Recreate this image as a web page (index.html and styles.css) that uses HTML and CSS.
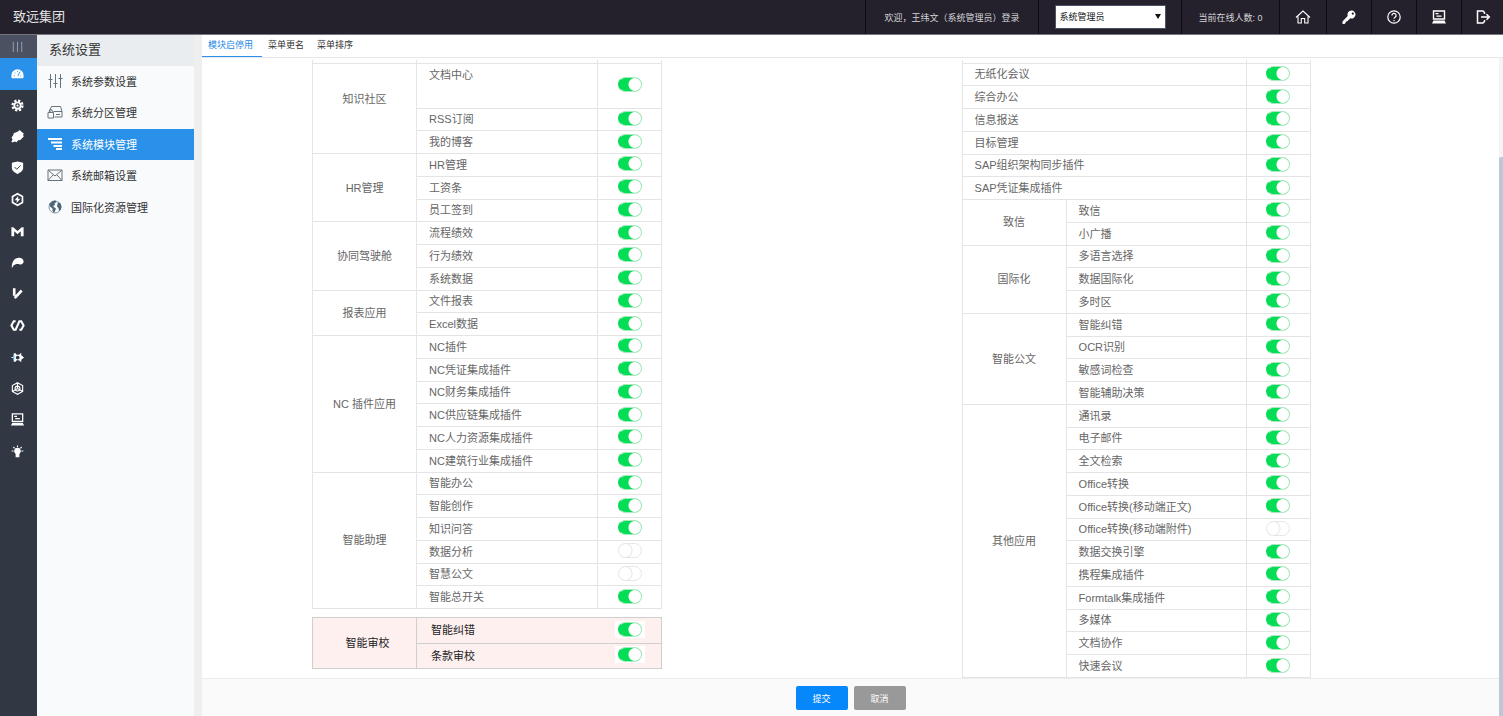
FILE: index.html
```html
<!DOCTYPE html>
<html lang="zh-CN">
<head>
  <meta charset="UTF-8">
  <title>系统模块管理</title>
  <link rel="stylesheet" href="styles.css">
</head>
<body>
  <!-- top bar -->
  <header class="topbar">
    <div class="brand">致远集团</div>
    <div class="top-cell welcome">欢迎，王纬文（系统管理员）登录</div>
    <div class="top-cell role">
      <div class="role-wrap">
        <select class="role-select" aria-label="角色">
          <option>系统管理员</option>
        </select>
      </div>
    </div>
    <div class="top-cell online">当前在线人数: 0</div>
    <button class="top-cell top-btn wide" aria-label="首页">
      <svg viewBox="0 0 16 16"><path d="M1 8.500 8 2l7 6.500M3 7.500V14h3.300v-4.500h3.400V14H13V7.500" fill="none" stroke="currentColor" stroke-width="1.100"/></svg>
    </button>
    <button class="top-cell top-btn" aria-label="修改密码">
      <svg viewBox="0 0 16 16"><path d="M10.500 1.500a4 4 0 1 1-1.200 7.800L6 12.500H4.700v1.300L3.500 15H1.500v-2.500L6.700 7a4 4 0 0 1 3.800-5.500zm1.300 2a1.100 1.100 0 1 0 .1 2.200 1.100 1.100 0 0 0-.1-2.200z" fill="currentColor" fill-rule="evenodd"/></svg>
    </button>
    <button class="top-cell top-btn" aria-label="帮助">
      <svg viewBox="0 0 16 16" fill="none" stroke="currentColor" stroke-width="1.200"><circle cx="8" cy="8" r="6.200"/><path d="M5.900 6.500a2.100 2.100 0 1 1 3.200 1.700c-.8.5-1.100.8-1.100 1.600M8 11v1.200"/></svg>
    </button>
    <button class="top-cell top-btn" aria-label="桌面">
      <svg viewBox="0 0 16 16"><path d="M2.500 2h11v8h-11z" fill="none" stroke="currentColor" stroke-width="1.400"/><path d="M4.500 4h3v1.200h-3zM5.500 6.500h5v1.200h-5zM2.500 11.500h11l1.500 3H1z" fill="currentColor"/></svg>
    </button>
    <button class="top-cell top-btn" aria-label="退出">
      <svg viewBox="0 0 16 16" fill="none" stroke="currentColor" stroke-width="1.500"><path d="M9.500 5V3.500L8 2H2.500v12H8l1.500-1.500V11M6 8h8M11.500 5.200 14.300 8l-2.800 2.800"/></svg>
    </button>
  </header>

  <div class="layout">
    <!-- icon rail -->
    <nav class="rail">
      <button class="rail-toggle" aria-label="收起菜单">
        <svg viewBox="0 0 16 16"><path d="M3.500 3v11M8 3v11M12.500 3v11" stroke="currentColor" fill="none"/></svg>
      </button>
      <ul class="rail-list">
        <li class="active"><a href="#" aria-label="系统设置"><svg viewBox="0 0 16 16"><path d="M2 13a6.700 6.700 0 0 1-.5-3 6.500 6.500 0 0 1 13 0 6.700 6.700 0 0 1-.5 3z" fill="currentColor"/><path d="M4 10.500h1M5 7l.8.7M8 5.500v1M12 10.500h-1M10.800 6 8.300 10.800" stroke="#2991ea" fill="none"/></svg></a></li>
        <li><a href="#" aria-label="参数"><svg viewBox="0 0 16 16"><circle cx="8" cy="8" r="5.300" fill="none" stroke="currentColor" stroke-width="2.400" stroke-dasharray="2.400 1.760"/><circle cx="8" cy="8" r="3.400" fill="none" stroke="currentColor" stroke-width="2"/><circle cx="8" cy="8" r="1.200" fill="currentColor"/></svg></a></li>
        <li><a href="#" aria-label="插件"><svg viewBox="0 0 16 16"><path d="M8.500 2.700 10.500 1l1.400 1.600 2.800 2.200-.8 1.500.8 1.700-4 4-1.700-.2L7 14l-2-.8-2.500 1.300-1-1 1.200-2-1-2.500 2-3 .2-1.600z" fill="currentColor"/></svg></a></li>
        <li><a href="#" aria-label="安全"><svg viewBox="0 0 16 16"><path d="M8 1.500 14 3v5.500c0 3-3 5-6 6.300-3-1.300-6-3.300-6-6.300V3z" fill="currentColor"/><path d="m4.800 7.500 2.400 2.400 4.200-4.200" stroke="#323744" fill="none"/></svg></a></li>
        <li><a href="#" aria-label="性能"><svg viewBox="0 0 16 16"><path d="m8 1.800 5.300 3v6.400L8 14.200l-5.300-3V4.800z" fill="none" stroke="currentColor" stroke-width="1.800"/><path d="M8.800 4 5 8.700h2.300L7 12l4-4.800H8.500z" fill="currentColor"/></svg></a></li>
        <li><a href="#" aria-label="移动"><svg viewBox="0 0 16 16"><path d="M1.500 3.500h2L8 7.500l4.500-4h2v9.500h-3V7.800L8 11 4.500 7.800V13h-3z" fill="currentColor"/></svg></a></li>
        <li><a href="#" aria-label="集成"><svg viewBox="0 0 16 16"><path d="M2 14C1.500 7 5 3 9.500 3c3 0 5 1.500 5 4 0 2.200-2 3.500-4 3-2.500-.7-5.500-.3-7 1.500z" fill="currentColor"/></svg></a></li>
        <li><a href="#" aria-label="工作流"><svg viewBox="0 0 16 16"><path d="M4.500 2.500v8M12.500 4.800 5 13" fill="none" stroke="currentColor" stroke-width="2.800"/></svg></a></li>
        <li><a href="#" aria-label="开发"><svg viewBox="0 0 16 16"><path d="M6 3.500H4L1.500 8 4 12.500h2l4-9h2L14.500 8 12 12.500h-2" fill="none" stroke="currentColor" stroke-width="2.200"/></svg></a></li>
        <li><a href="#" aria-label="数据"><svg viewBox="0 0 16 16"><path d="M4 3.500h2l1 1.500h2.500L12 3v2.500L15 8l-3 2.500V13l-2.500-2H7l-1 1.500H4z" fill="currentColor"/><circle cx="8.200" cy="8" r="2" fill="#323744"/><path d="M4 5v6" stroke="#58b2f5" stroke-width="1.200"/><path d="M1.500 8h2" stroke="currentColor"/></svg></a></li>
        <li><a href="#" aria-label="区块"><svg viewBox="0 0 16 16" fill="none" stroke="currentColor" stroke-width="1.200"><path d="m8 1.800 5.500 3v6.400l-5.500 3-5.500-3V4.800zM8 2v5.500M8 8l5 3M8 8l-5 3"/><circle cx="8" cy="8" r="2.600"/></svg></a></li>
        <li><a href="#" aria-label="终端"><svg viewBox="0 0 16 16"><path d="M2.500 2h11v8h-11z" fill="none" stroke="currentColor" stroke-width="1.400"/><path d="M4.500 4h3v1.200h-3zM5.500 6.500h5v1.200h-5zM2.500 11.500h11l1.500 3H1z" fill="currentColor"/></svg></a></li>
        <li><a href="#" aria-label="提示"><svg viewBox="0 0 16 16"><path d="M8 4a3.600 3.600 0 0 1 2 6.600V14H6v-3.400A3.600 3.600 0 0 1 8 4z" fill="currentColor"/><path d="M8 1.500v2M1.800 7.500h2M12.200 7.500h2M3.600 3.200 5 4.600M12.400 3.200 11 4.600" stroke="currentColor" stroke-width="1.200"/></svg></a></li>
      </ul>
    </nav>

    <!-- second level menu -->
    <aside class="submenu">
      <h2 class="submenu-title">系统设置</h2>
      <ul class="submenu-list">
        <li><a href="#"><svg viewBox="0 0 16 16" fill="none" stroke="currentColor"><path d="M3.500 1v14M8.500 1v14M13.500 1v14M1.500 6.500h4M6.500 10.500h4M11.500 5.500h4"/></svg>系统参数设置</a></li>
        <li><a href="#"><svg viewBox="0 0 16 16" fill="none" stroke="currentColor"><path d="M3 8V6l1.500-3.500h9L15 7.500V13H7.500M6.500 7.500H15M1 8.500h5.500V14H1zM2.300 8.500V7a1.500 1.500 0 0 1 3 0v1.500M9 10.500h4"/></svg>系统分区管理</a></li>
        <li class="active"><a href="#"><svg viewBox="0 0 16 16"><path d="M1 3h14M4 6.500h11M6.500 10H15M9 13h6" stroke="currentColor" stroke-width="2"/></svg>系统模块管理</a></li>
        <li><a href="#"><svg viewBox="0 0 16 16" fill="none" stroke="currentColor"><path d="M1 3h14v10.500H1zM1 3l7 6 7-6M1 13.500 6 8M15 13.500 10 8"/></svg>系统邮箱设置</a></li>
        <li><a href="#"><svg viewBox="0 0 16 16"><circle cx="8" cy="8" r="6" fill="none" stroke="#8798a6"/><path d="M2 5 5.500 2l3-.5L9.500 3 7.500 4.500 8 6 6 7l1.500 1.500L9 9.500 8 12l-1 2-1.500-2V9.500L3.500 8zM11 3l2.500 1.500 1 3.500-1 3-1.500 1-.5-3-1.500-1.500L10.500 5z" fill="#4d6577"/></svg>国际化资源管理</a></li>
      </ul>
    </aside>

    <main class="main">
      <nav class="tabs">
        <a href="#" class="tab active">模块启停用</a>
        <a href="#" class="tab">菜单更名</a>
        <a href="#" class="tab">菜单排序</a>
      </nav>

      <div class="work">
        <div class="pane">
          <div class="modules">
            <!-- left column -->
            <section class="col col-left">
              <table class="mod-table">
                <colgroup><col class="c-group"><col><col class="c-switch"></colgroup>
                <tbody>
                  <tr class="cut"><td></td><td></td><td></td></tr>
                  <tr class="tall"><th rowspan="3">知识社区</th><td><label for="m1">文档中心</label></td><td><input type="checkbox" class="switch" id="m1" checked></td></tr>
                  <tr><td><label for="m2">RSS订阅</label></td><td><input type="checkbox" class="switch" id="m2" checked></td></tr>
                  <tr><td><label for="m3">我的博客</label></td><td><input type="checkbox" class="switch" id="m3" checked></td></tr>
                  <tr><th rowspan="3">HR管理</th><td><label for="m4">HR管理</label></td><td><input type="checkbox" class="switch" id="m4" checked></td></tr>
                  <tr><td><label for="m5">工资条</label></td><td><input type="checkbox" class="switch" id="m5" checked></td></tr>
                  <tr><td><label for="m6">员工签到</label></td><td><input type="checkbox" class="switch" id="m6" checked></td></tr>
                  <tr><th rowspan="3">协同驾驶舱</th><td><label for="m7">流程绩效</label></td><td><input type="checkbox" class="switch" id="m7" checked></td></tr>
                  <tr><td><label for="m8">行为绩效</label></td><td><input type="checkbox" class="switch" id="m8" checked></td></tr>
                  <tr><td><label for="m9">系统数据</label></td><td><input type="checkbox" class="switch" id="m9" checked></td></tr>
                  <tr><th rowspan="2">报表应用</th><td><label for="m10">文件报表</label></td><td><input type="checkbox" class="switch" id="m10" checked></td></tr>
                  <tr><td><label for="m11">Excel数据</label></td><td><input type="checkbox" class="switch" id="m11" checked></td></tr>
                  <tr><th rowspan="6">NC 插件应用</th><td><label for="m12">NC插件</label></td><td><input type="checkbox" class="switch" id="m12" checked></td></tr>
                  <tr><td><label for="m13">NC凭证集成插件</label></td><td><input type="checkbox" class="switch" id="m13" checked></td></tr>
                  <tr><td><label for="m14">NC财务集成插件</label></td><td><input type="checkbox" class="switch" id="m14" checked></td></tr>
                  <tr><td><label for="m15">NC供应链集成插件</label></td><td><input type="checkbox" class="switch" id="m15" checked></td></tr>
                  <tr><td><label for="m16">NC人力资源集成插件</label></td><td><input type="checkbox" class="switch" id="m16" checked></td></tr>
                  <tr><td><label for="m17">NC建筑行业集成插件</label></td><td><input type="checkbox" class="switch" id="m17" checked></td></tr>
                  <tr><th rowspan="6">智能助理</th><td><label for="m18">智能办公</label></td><td><input type="checkbox" class="switch" id="m18" checked></td></tr>
                  <tr><td><label for="m19">智能创作</label></td><td><input type="checkbox" class="switch" id="m19" checked></td></tr>
                  <tr><td><label for="m20">知识问答</label></td><td><input type="checkbox" class="switch" id="m20" checked></td></tr>
                  <tr><td><label for="m21">数据分析</label></td><td><input type="checkbox" class="switch" id="m21"></td></tr>
                  <tr><td><label for="m22">智慧公文</label></td><td><input type="checkbox" class="switch" id="m22"></td></tr>
                  <tr><td><label for="m23">智能总开关</label></td><td><input type="checkbox" class="switch" id="m23" checked></td></tr>
                </tbody>
              </table>

              <!-- highlighted group -->
              <table class="mod-table review">
                <colgroup><col class="c-group"><col><col class="c-switch"></colgroup>
                <tbody>
                  <tr><th rowspan="2">智能审校</th><td><label for="r1">智能纠错</label></td><td><span class="switch-box"><input type="checkbox" class="switch" id="r1" checked></span></td></tr>
                  <tr><td><label for="r2">条款审校</label></td><td><span class="switch-box"><input type="checkbox" class="switch" id="r2" checked></span></td></tr>
                </tbody>
              </table>
            </section>

            <!-- right column -->
            <section class="col col-right">
              <table class="mod-table">
                <colgroup><col class="c-group"><col><col class="c-switch"></colgroup>
                <tbody>
                  <tr class="cut"><td colspan="2"></td><td></td></tr>
                  <tr><td colspan="2"><label for="n1">无纸化会议</label></td><td><input type="checkbox" class="switch" id="n1" checked></td></tr>
                  <tr><td colspan="2"><label for="n2">综合办公</label></td><td><input type="checkbox" class="switch" id="n2" checked></td></tr>
                  <tr><td colspan="2"><label for="n3">信息报送</label></td><td><input type="checkbox" class="switch" id="n3" checked></td></tr>
                  <tr><td colspan="2"><label for="n4">目标管理</label></td><td><input type="checkbox" class="switch" id="n4" checked></td></tr>
                  <tr><td colspan="2"><label for="n5">SAP组织架构同步插件</label></td><td><input type="checkbox" class="switch" id="n5" checked></td></tr>
                  <tr><td colspan="2"><label for="n6">SAP凭证集成插件</label></td><td><input type="checkbox" class="switch" id="n6" checked></td></tr>
                  <tr><th rowspan="2">致信</th><td><label for="n7">致信</label></td><td><input type="checkbox" class="switch" id="n7" checked></td></tr>
                  <tr><td><label for="n8">小广播</label></td><td><input type="checkbox" class="switch" id="n8" checked></td></tr>
                  <tr><th rowspan="3">国际化</th><td><label for="n9">多语言选择</label></td><td><input type="checkbox" class="switch" id="n9" checked></td></tr>
                  <tr><td><label for="n10">数据国际化</label></td><td><input type="checkbox" class="switch" id="n10" checked></td></tr>
                  <tr><td><label for="n11">多时区</label></td><td><input type="checkbox" class="switch" id="n11" checked></td></tr>
                  <tr><th rowspan="4">智能公文</th><td><label for="n12">智能纠错</label></td><td><input type="checkbox" class="switch" id="n12" checked></td></tr>
                  <tr><td><label for="n13">OCR识别</label></td><td><input type="checkbox" class="switch" id="n13" checked></td></tr>
                  <tr><td><label for="n14">敏感词检查</label></td><td><input type="checkbox" class="switch" id="n14" checked></td></tr>
                  <tr><td><label for="n15">智能辅助决策</label></td><td><input type="checkbox" class="switch" id="n15" checked></td></tr>
                  <tr><th rowspan="12">其他应用</th><td><label for="n16">通讯录</label></td><td><input type="checkbox" class="switch" id="n16" checked></td></tr>
                  <tr><td><label for="n17">电子邮件</label></td><td><input type="checkbox" class="switch" id="n17" checked></td></tr>
                  <tr><td><label for="n18">全文检索</label></td><td><input type="checkbox" class="switch" id="n18" checked></td></tr>
                  <tr><td><label for="n19">Office转换</label></td><td><input type="checkbox" class="switch" id="n19" checked></td></tr>
                  <tr><td><label for="n20">Office转换(移动端正文)</label></td><td><input type="checkbox" class="switch" id="n20" checked></td></tr>
                  <tr><td><label for="n21">Office转换(移动端附件)</label></td><td><input type="checkbox" class="switch" id="n21"></td></tr>
                  <tr><td><label for="n22">数据交换引擎</label></td><td><input type="checkbox" class="switch" id="n22" checked></td></tr>
                  <tr><td><label for="n23">携程集成插件</label></td><td><input type="checkbox" class="switch" id="n23" checked></td></tr>
                  <tr><td><label for="n24">Formtalk集成插件</label></td><td><input type="checkbox" class="switch" id="n24" checked></td></tr>
                  <tr><td><label for="n25">多媒体</label></td><td><input type="checkbox" class="switch" id="n25" checked></td></tr>
                  <tr><td><label for="n26">文档协作</label></td><td><input type="checkbox" class="switch" id="n26" checked></td></tr>
                  <tr><td><label for="n27">快速会议</label></td><td><input type="checkbox" class="switch" id="n27" checked></td></tr>
                </tbody>
              </table>
            </section>
          </div>

          <footer class="actions">
            <button class="btn btn-primary">提交</button>
            <button class="btn btn-cancel">取消</button>
          </footer>
        </div>
        <div class="scroll-track"><div class="scroll-thumb"></div></div>
      </div>
    </main>
  </div>
</body>
</html>
```
FILE: styles.css
```css
* {
  box-sizing: border-box;
}

body {
  margin: 0;
  height: 100vh;
  display: flex;
  flex-direction: column;
  font-family: "Liberation Sans", "Noto Sans CJK SC", sans-serif;
  font-size: 11px;
  color: #333;
  background: #fff;
}

ul {
  list-style: none;
  margin: 0;
  padding: 0;
}

a {
  color: inherit;
  text-decoration: none;
}

button {
  font-family: inherit;
  border: 0;
  padding: 0;
  cursor: pointer;
}

svg {
  width: 16px;
  height: 16px;
  display: block;
}

/* top bar */
.topbar {
  display: flex;
  flex: none;
  height: 35px;
  background: #24212c;
  border-bottom: 1px solid #77757d;
  color: #e4e4e6;
}

.brand {
  flex: 1;
  padding-left: 13px;
  line-height: 34px;
  font-size: 13px;
}

.top-cell {
  display: flex;
  align-items: center;
  justify-content: center;
  border-left: 1px solid #0e0b13;
  font-size: 9px;
  color: #d4d4d8;
}

.welcome {
  width: 173px;
}

.role {
  width: 143px;
}

.online {
  width: 98px;
}

.role-wrap {
  position: relative;
}

.role-wrap::after {
  content: "";
  position: absolute;
  top: 9px;
  right: 5px;
  border: 3px solid transparent;
  border-top: 5px solid #111;
  pointer-events: none;
}

.role-select {
  appearance: none;
  display: block;
  width: 111px;
  height: 24px;
  padding: 0 4px;
  border: 1px solid #4c5468;
  border-radius: 1px;
  background: #fff;
  color: #111;
  font-family: inherit;
  font-size: 9px;
}

.top-btn {
  width: 45px;
  background: none;
  border-left: 1px solid #0e0b13;
  color: #fff;
}

.top-btn.wide {
  width: 47px;
}

.top-btn:last-child {
  width: 42px;
}

.layout {
  flex: 1;
  display: flex;
  min-height: 0;
}

/* icon rail */
.rail {
  width: 37px;
  flex: none;
  background: #323744;
  color: #fff;
}

.rail svg {
  width: 15px;
  height: 15px;
}

.rail-toggle {
  display: flex;
  align-items: center;
  justify-content: center;
  width: 100%;
  height: 23px;
  padding-right: 2px;
  background: #4c5161;
  color: #8fa3bd;
}

.rail-list a {
  display: flex;
  align-items: center;
  justify-content: center;
  height: 100%;
  padding: 0 2px 2px 0;
}

.rail-list li,
.submenu-list li {
  height: 31px;
}

.rail-list li:nth-child(even):not(:nth-child(4n)),
.rail-list .active,
.submenu-list li:nth-child(even) {
  height: 32px;
}

.rail-list li:nth-child(4n+1) {
  height: 32px;
}

.rail-list .active {
  background: #2991ea;
}

/* second level menu */
.submenu {
  width: 165px;
  flex: none;
  background: #f8fafc;
  border-right: 8px solid #efefef;
}

.submenu-title {
  margin: 0;
  padding: 0 0 2px 12px;
  line-height: 29px;
  font-size: 13px;
  font-weight: normal;
  background: #e9edf0;
}

.submenu-list a {
  display: flex;
  align-items: center;
  gap: 8px;
  height: 100%;
  padding: 0 0 2px 10px;
}

.submenu-list svg {
  color: #66737d;
}

.submenu-list .active,
.submenu-list .active svg {
  background: #2991ea;
  color: #fff;
}

/* content */
.main {
  flex: 1;
  min-width: 0;
  display: flex;
  flex-direction: column;
}

.tabs {
  display: flex;
  flex: none;
  height: 23px;
  border-bottom: 1px solid #e8e8e8;
}

.tab {
  padding: 0 7px 0 6px;
  line-height: 21px;
  font-size: 9px;
}

.tab.active {
  width: 60px;
  height: 22px;
  border-bottom: 1px solid #2991ea;
  color: #1d88e5;
}

.work {
  flex: 1;
  min-height: 0;
  display: flex;
}

.pane {
  flex: 1;
  display: flex;
  flex-direction: column;
}

.modules {
  flex: 1;
  display: grid;
  grid-template-columns: 110fr 350fr 299fr 349fr 188fr;
  padding-top: 2px;
}

.col {
  display: flex;
  flex-direction: column;
}

.col-left {
  grid-column: 2;
  gap: 8px;
  padding-bottom: 9px;
}

.col-right {
  grid-column: 4;
}

.mod-table {
  flex: 1;
  width: 100%;
  table-layout: fixed;
  border-collapse: collapse;
  color: #666;
}

.c-group {
  width: 104px;
}

.c-switch {
  width: 64px;
}

.mod-table th,
.mod-table td {
  padding: 0;
  border: 1px solid #e4e4e4;
  line-height: 16px;
  font-weight: normal;
}

.mod-table label {
  display: block;
  padding-left: 12px;
}

.mod-table td:last-child {
  padding-bottom: 2px;
  text-align: center;
}

.mod-table .cut {
  height: 3px;
}

.mod-table .cut td {
  padding: 0;
  border-top: 0;
}

.mod-table .tall {
  height: 45px;
}

.mod-table .tall th {
  padding-bottom: 18px;
}

.mod-table .tall label {
  height: 38px;
}

/* on/off switch */
.switch {
  appearance: none;
  display: block;
  width: 24px;
  height: 15px;
  margin: 0 auto;
  border: 1px solid #e6e6e6;
  border-radius: 8px;
  background: radial-gradient(circle at 6px 50%, #fff 6px, #e6e6e6 7px, #fff 8px);
}

.switch:checked {
  border-color: #a9e8bf;
  border-left-color: #04dd55;
  background: radial-gradient(circle at 16px 50%, #fff 6px, #04dd55 7px);
}

/* highlighted group */
.mod-table.review {
  flex: none;
  height: 52px;
  background: #fff0f0;
  border: 1px solid #cfcfcf;
  color: #222;
}

.review th,
.review td {
  border-color: #cfcfcf;
}

.review td {
  border-left: 0;
  border-right: 0;
}

.review th {
  padding-left: 6px;
}

.review label {
  padding-left: 14px;
}

.switch-box {
  display: block;
  width: 30px;
  margin: 0 auto;
  padding: 1px 0;
  background: #fff;
}

/* bottom buttons */
.actions {
  display: flex;
  flex: none;
  justify-content: center;
  gap: 6px;
  padding: 7px 0 6px;
  border-top: 1px solid #ececec;
  background: #fafafa;
}

.btn {
  width: 52px;
  height: 24px;
  border-radius: 2px;
  color: #fff;
  font-size: 9px;
}

.btn-primary {
  background: #0688fa;
}

.btn-cancel {
  background: #999;
}

.scroll-track {
  flex: none;
  width: 4px;
  padding-top: 99px;
  background: #f3f5f5;
}

.scroll-thumb {
  height: 100%;
  border-radius: 2px 0 0 0;
  background: #bcc7da;
}
```
